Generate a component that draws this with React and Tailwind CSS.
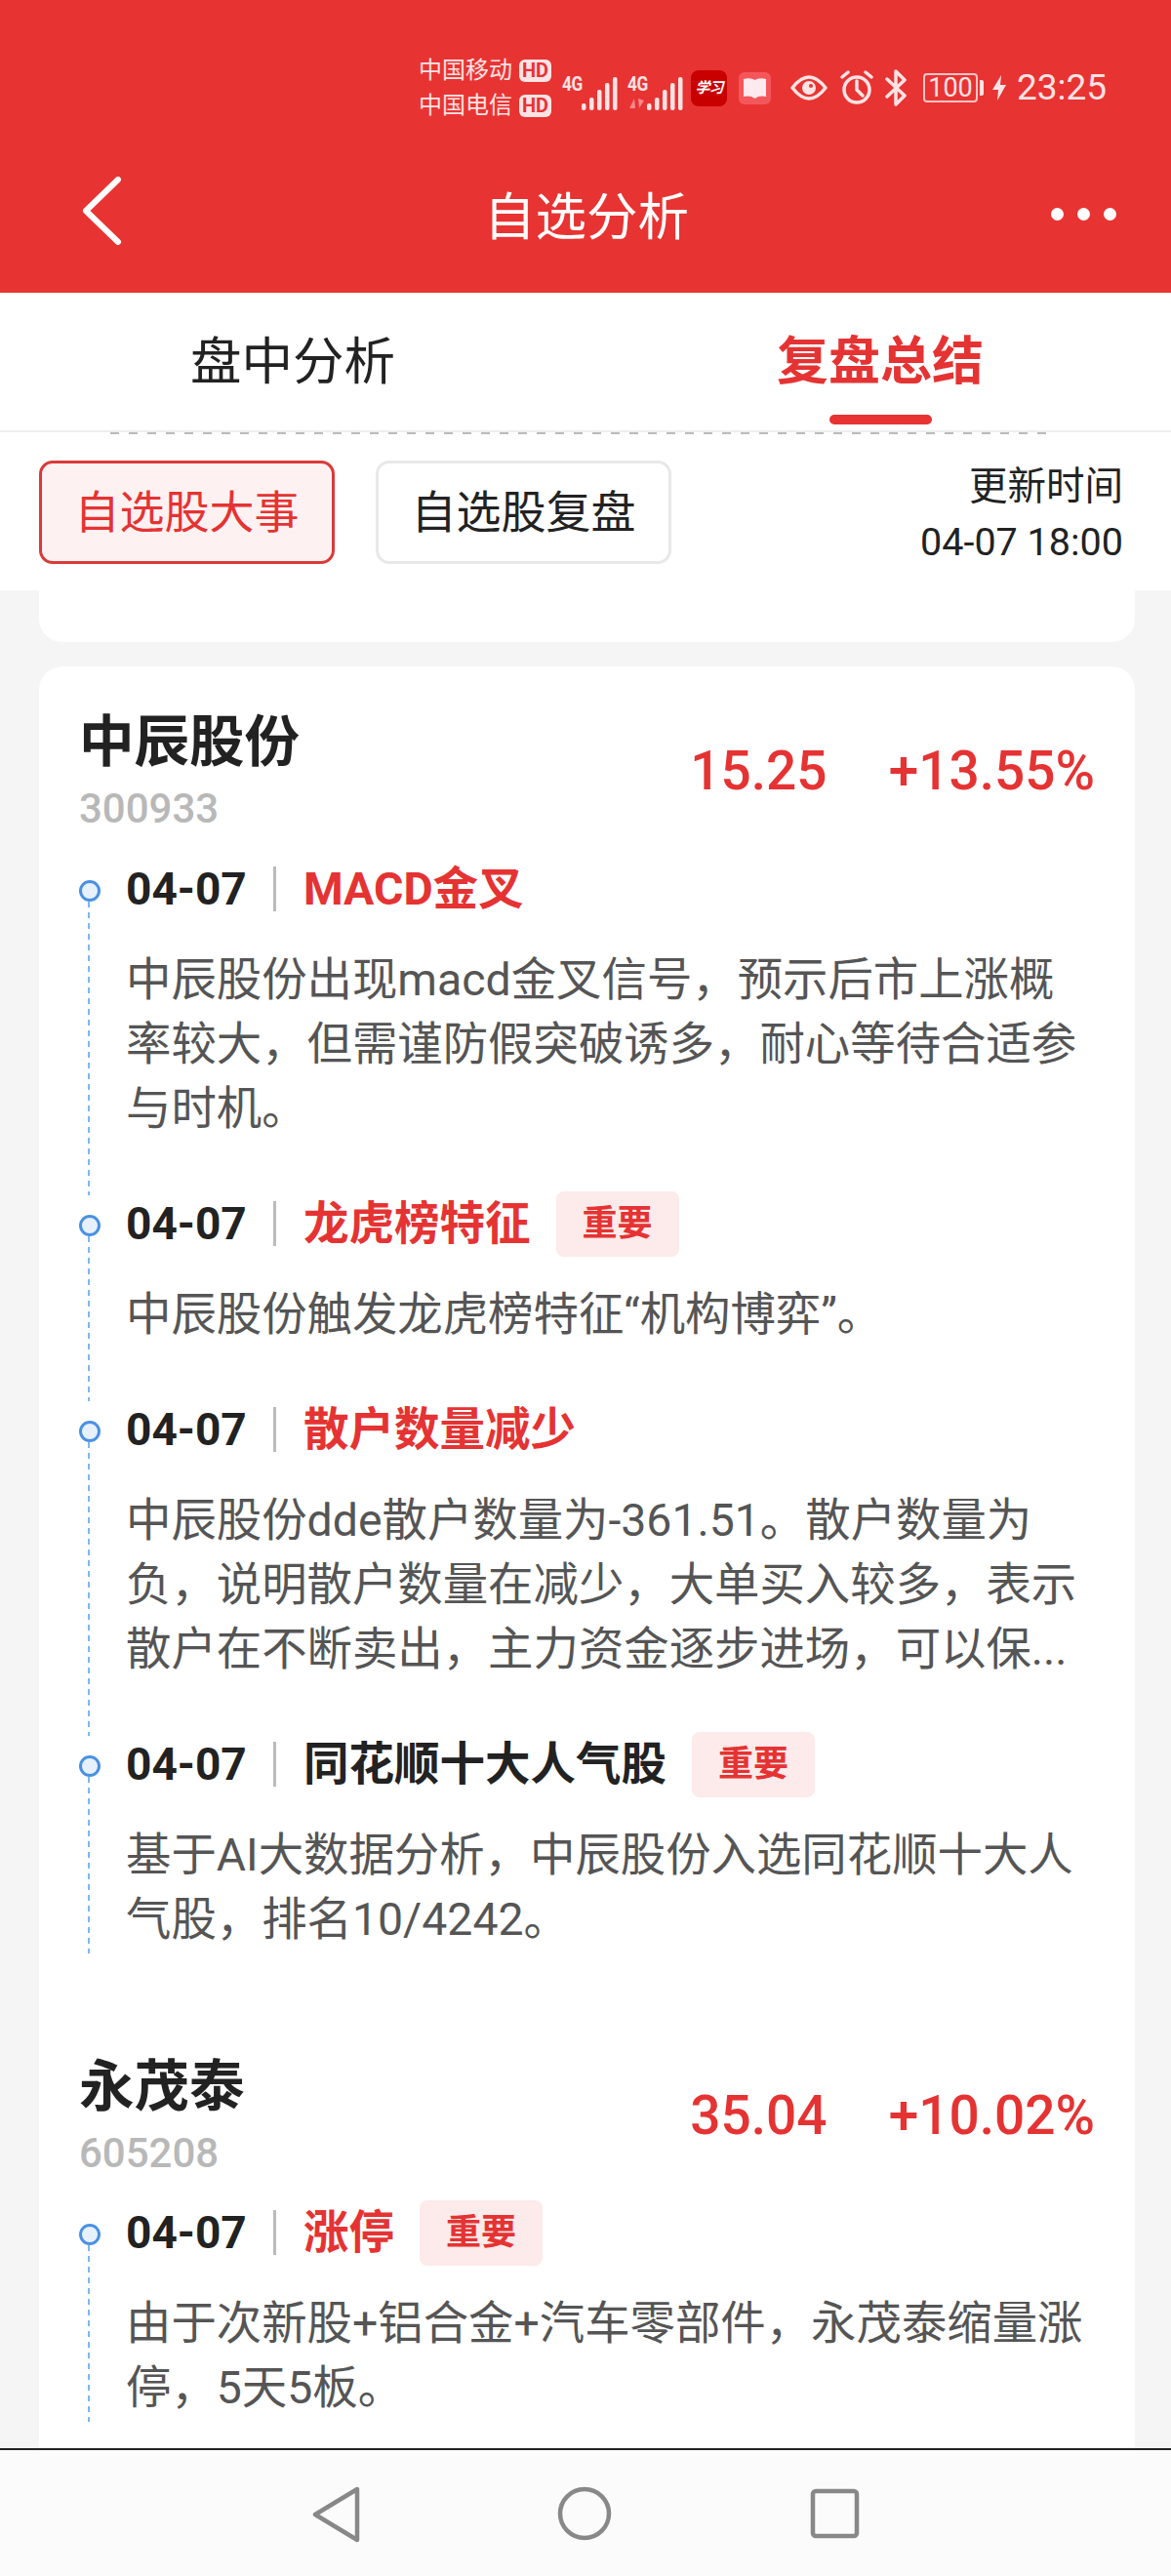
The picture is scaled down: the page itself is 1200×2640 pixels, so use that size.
const FONT = 'font-["Roboto","Noto_Sans_CJK_SC",sans-serif]';

function Signal({ arrows }) {
  return (
    <div className="relative w-[52px] h-[36px] shrink-0">
      <span className="absolute left-0 top-[-4px] font-['Roboto'] font-bold text-[21px] leading-[22px] tracking-[-0.5px] text-[#fde3e3] scale-x-[0.82] origin-left">4G</span>
      <svg className="absolute left-0 top-0" width="58" height="36" viewBox="0 0 58 36" fill="#fde3e3">
        {arrows && <path d="M2 32 L7 22 L8 32 Z M11 22 L12 32 L17 24 Z" fill="#f58a8a" />}
        <rect x="20" y="27" width="4.5" height="7" rx="2" />
        <rect x="28" y="21" width="4.5" height="13" rx="2" />
        <rect x="36" y="13" width="4.5" height="21" rx="2" />
        <rect x="44" y="6" width="4.5" height="28" rx="2" />
        <rect x="52" y="0" width="4.5" height="34" rx="2" />
      </svg>
    </div>
  );
}

function HD() {
  return <span className="ml-[7px] w-[33px] h-[23px] rounded-[6px] bg-[#fde3e3] text-[#e83333] font-['Roboto'] font-bold text-[20px] leading-[23px] text-center">HD</span>;
}

function StatusBar() {
  return (
    <div className="h-[144px] mt-[18px] flex items-center pl-[429px] text-[#fde3e3]">
      <div className="flex flex-col gap-[12px] w-[136px] shrink-0">
        <div className="flex items-center text-[24px] leading-[24px]"><span>中国移动</span><HD /></div>
        <div className="flex items-center text-[24px] leading-[24px]"><span>中国电信</span><HD /></div>
      </div>
      <div className="flex gap-[15px] ml-[11px] mt-[14px]">
        <Signal />
        <Signal arrows />
      </div>
      <div className="ml-[13px] w-[37px] h-[37px] rounded-[8px] bg-[#c80000] text-white text-[15px] leading-[37px] text-center italic font-bold tracking-[-1px] shrink-0">学习</div>
      <div className="ml-[12px] w-[33px] h-[33px] rounded-[6px] bg-[#f4575b] flex items-center justify-center shrink-0">
        <svg width="25" height="23" viewBox="0 0 25 23"><path d="M1 2 Q8 0 12.5 3 Q17 0 24 2 V20 Q17 18.5 12.5 22 Q8 18.5 1 20 Z" fill="#fdeaee" /></svg>
      </div>
      <svg className="ml-[20px] shrink-0" width="38" height="30" viewBox="0 0 38 30" fill="none" stroke="#fde3e3" strokeWidth="3.5">
        <path d="M2 15 Q19 -7 36 15 Q19 37 2 15 Z" strokeLinejoin="round" />
        <circle cx="19" cy="15" r="7" fill="#fde3e3" stroke="none" />
        <circle cx="21" cy="13" r="2" fill="#e83333" stroke="none" />
      </svg>
      <svg className="ml-[13px] shrink-0" width="34" height="36" viewBox="0 0 34 36" fill="none" stroke="#fde3e3" strokeWidth="3.5" strokeLinecap="round">
        <circle cx="17" cy="20" r="13" />
        <path d="M17 11 V20 L23 26 M2 7 L8 2 M32 7 L26 2" />
      </svg>
      <svg className="ml-[12px] shrink-0" width="23" height="38" viewBox="0 0 23 38" fill="none" stroke="#fde3e3" strokeWidth="3.5" strokeLinecap="round" strokeLinejoin="round">
        <path d="M2 10 L20 27 L11 36 V2 L20 11 L2 28" />
      </svg>
      <div className="ml-[16px] w-[56px] h-[30px] rounded-[4px] border-2 border-[#fbc4c4] text-[27px] leading-[26px] text-center font-['Roboto'] shrink-0">100</div>
      <div className="ml-[2px] w-[4px] h-[16px] rounded-r-[2px] bg-[#fde3e3] shrink-0" />
      <svg className="ml-[9px] shrink-0" width="14" height="26" viewBox="0 0 14 26" fill="#fde3e3"><path d="M9 0 L0 15 H6 L5 26 L14 10 H8 Z" /></svg>
      <span className="ml-[11px] font-['Roboto'] text-[37px] leading-[40px]">23:25</span>
    </div>
  );
}

function Tag() {
  return <span className="ml-[26px] w-[126px] h-[67px] rounded-[8px] bg-[#fdeaea] text-[#e53333] text-[36px] font-bold leading-[67px] text-center shrink-0">重要</span>;
}

function Event({ title, red, tag, last, gap = 'pb-[51px]', children }) {
  return (
    <div className={`relative pl-[48px] ${gap}`}>
      <div className="absolute left-[9px] top-[47px] bottom-[-5px] w-[2px] bg-[repeating-linear-gradient(to_bottom,#7db8f0_0,#7db8f0_6px,transparent_6px,transparent_11px)]" style={last ? { bottom: 0 } : undefined} />
      <div className="absolute left-0 top-[25px] w-[22px] h-[22px] rounded-full border-[3px] border-[#4a90e2] bg-[#e6f1fd]" />
      <div className="flex items-center h-[68px]">
        <span className="font-['Roboto'] font-bold text-[46px] leading-[68px] text-[#222] w-[151px] shrink-0">04-07</span>
        <span className="w-[3px] h-[46px] bg-[#bbbbbb] shrink-0" />
        <span className={`ml-[28px] text-[46.5px] font-bold leading-[68px] whitespace-nowrap ${red ? 'text-[#e53333]' : 'text-[#222]'}`}>{title}</span>
        {tag && <Tag />}
      </div>
      <p className="mt-[26px] w-[985px] text-[46.4px] leading-[66px] text-[#555555]">{children}</p>
    </div>
  );
}

function Stock({ name, code, price, pct, top }) {
  return (
    <div className={`flex justify-between ${top}`}>
      <div>
        <div className="text-[56.5px] font-bold leading-[72px] text-[#222] mt-[1px]">{name}</div>
        <div className="mt-[7px] font-['Roboto'] font-medium text-[42px] leading-[50px] text-[#b8b8b8]">{code}</div>
      </div>
      <div className="flex mt-[36px] h-[60px] font-['Roboto'] font-medium text-[55px] leading-[60px] text-[#e53333]">
        <span>{price}</span>
        <span className="ml-[63px]">{pct}</span>
      </div>
    </div>
  );
}

export default function App() {
  return (
    <div className={`${FONT} w-[1200px] h-[2640px] flex flex-col overflow-hidden bg-[#f5f5f5]`}>
      <header className="h-[300px] bg-[#e83333] shrink-0">
        <StatusBar />
        <div className="h-[120px] flex items-center justify-between pl-[83px] pr-[56px]">
          <svg width="42" height="70" viewBox="0 0 42 70" fill="none" stroke="#ffffff" strokeWidth="6" strokeLinecap="round" strokeLinejoin="round" className="-mt-[12px]">
            <path d="M38 3 L5 35 L38 67" />
          </svg>
          <h1 className="text-[52.5px] font-normal text-white leading-[60px] mt-[1px]">自选分析</h1>
          <div className="flex gap-[14px] -mt-[5px]">
            <span className="w-[13px] h-[13px] rounded-full bg-white" />
            <span className="w-[13px] h-[13px] rounded-full bg-white" />
            <span className="w-[13px] h-[13px] rounded-full bg-white" />
          </div>
        </div>
      </header>

      <nav className="h-[143px] bg-white grid grid-cols-2 border-b-2 border-[#eeeeee] shrink-0">
        <div className="text-center text-[52.5px] leading-[143px] text-[#222]">盘中分析</div>
        <div className="relative text-center pl-[4px] text-[53px] font-bold leading-[143px] text-[#e53333]">
          复盘总结
          <span className="absolute left-[250px] top-[125px] w-[105px] h-[10px] rounded-full bg-[#e83333]" />
        </div>
      </nav>

      <div className="relative h-[162px] bg-white shrink-0">
        <div className="absolute left-[113px] top-0 h-[2px] w-[960px] bg-[repeating-linear-gradient(to_right,#bbbbbb_0,#bbbbbb_9px,transparent_9px,transparent_19px)]" />
        <div className="flex items-start px-[40px] pt-[29px]">
          <button className="w-[303px] h-[106px] rounded-[14px] border-[3px] border-[#d93a3a] bg-[#fef1f1] text-[46px] text-[#e53333]">自选股大事</button>
          <button className="ml-[42px] w-[303px] h-[106px] rounded-[14px] border-[3px] border-[#e8e8e8] bg-white text-[46px] text-[#222]">自选股复盘</button>
          <div className="ml-auto -mt-[2px] mr-[9px] text-right text-[39.5px] leading-[57px] text-[#222]">
            <div>更新时间</div>
            <div className="font-['Roboto']">04-07 18:00</div>
          </div>
        </div>
      </div>

      <main className="flex-1 min-h-0 overflow-hidden ml-[40px] mr-[37px]">
        <div className="h-[53px] bg-white rounded-b-[24px]" />
        <section className="mt-[25px] bg-white rounded-t-[24px] pl-[41px] pr-[41px] pt-[41px] pb-[40px]">
          <Stock name="中辰股份" code="300933" price="15.25" pct="+13.55%" />
          <div className="mt-[23px]">
            <Event title="MACD金叉" red>中辰股份出现macd金叉信号，预示后市上涨概率较大，但需谨防假突破诱多，耐心等待合适参与时机。</Event>
            <Event title="龙虎榜特征" red tag>中辰股份触发龙虎榜特征“机构博弈”。</Event>
            <Event title="散户数量减少" red>中辰股份dde散户数量为-361.51。散户数量为负，说明散户数量在减少，大单买入较多，表示散户在不断卖出，主力资金逐步进场，可以保...</Event>
            <Event title="同花顺十大人气股" tag last gap="pb-[2px]">基于AI大数据分析，中辰股份入选同花顺十大人气股，排名10/4242。</Event>
          </div>
          <Stock name="永茂泰" code="605208" price="35.04" pct="+10.02%" top="mt-[100px]" />
          <div className="mt-[22px]">
            <Event title="涨停" red tag last gap="pb-[2px]">由于次新股+铝合金+汽车零部件，永茂泰缩量涨停，5天5板。</Event>
          </div>
        </section>
      </main>

      <footer className="h-[131px] shrink-0 bg-[#fbfbfb] border-t-2 border-[#222] flex items-center relative">
        <svg className="absolute left-[319px] top-[37px]" width="52" height="58" viewBox="0 0 52 58" fill="none" stroke="#888888" strokeWidth="4.5" strokeLinejoin="round">
          <path d="M47 3 V55 L4 29 Z" />
        </svg>
        <svg className="absolute left-[571px] top-[37px]" width="56" height="56" viewBox="0 0 56 56" fill="none" stroke="#888888" strokeWidth="4.5">
          <circle cx="28" cy="28" r="25" />
        </svg>
        <svg className="absolute left-[830px] top-[39px]" width="51" height="52" viewBox="0 0 51 52" fill="none" stroke="#888888" strokeWidth="4.5" strokeLinejoin="round">
          <rect x="3" y="3" width="45" height="46" rx="3" />
        </svg>
      </footer>
    </div>
  );
}
